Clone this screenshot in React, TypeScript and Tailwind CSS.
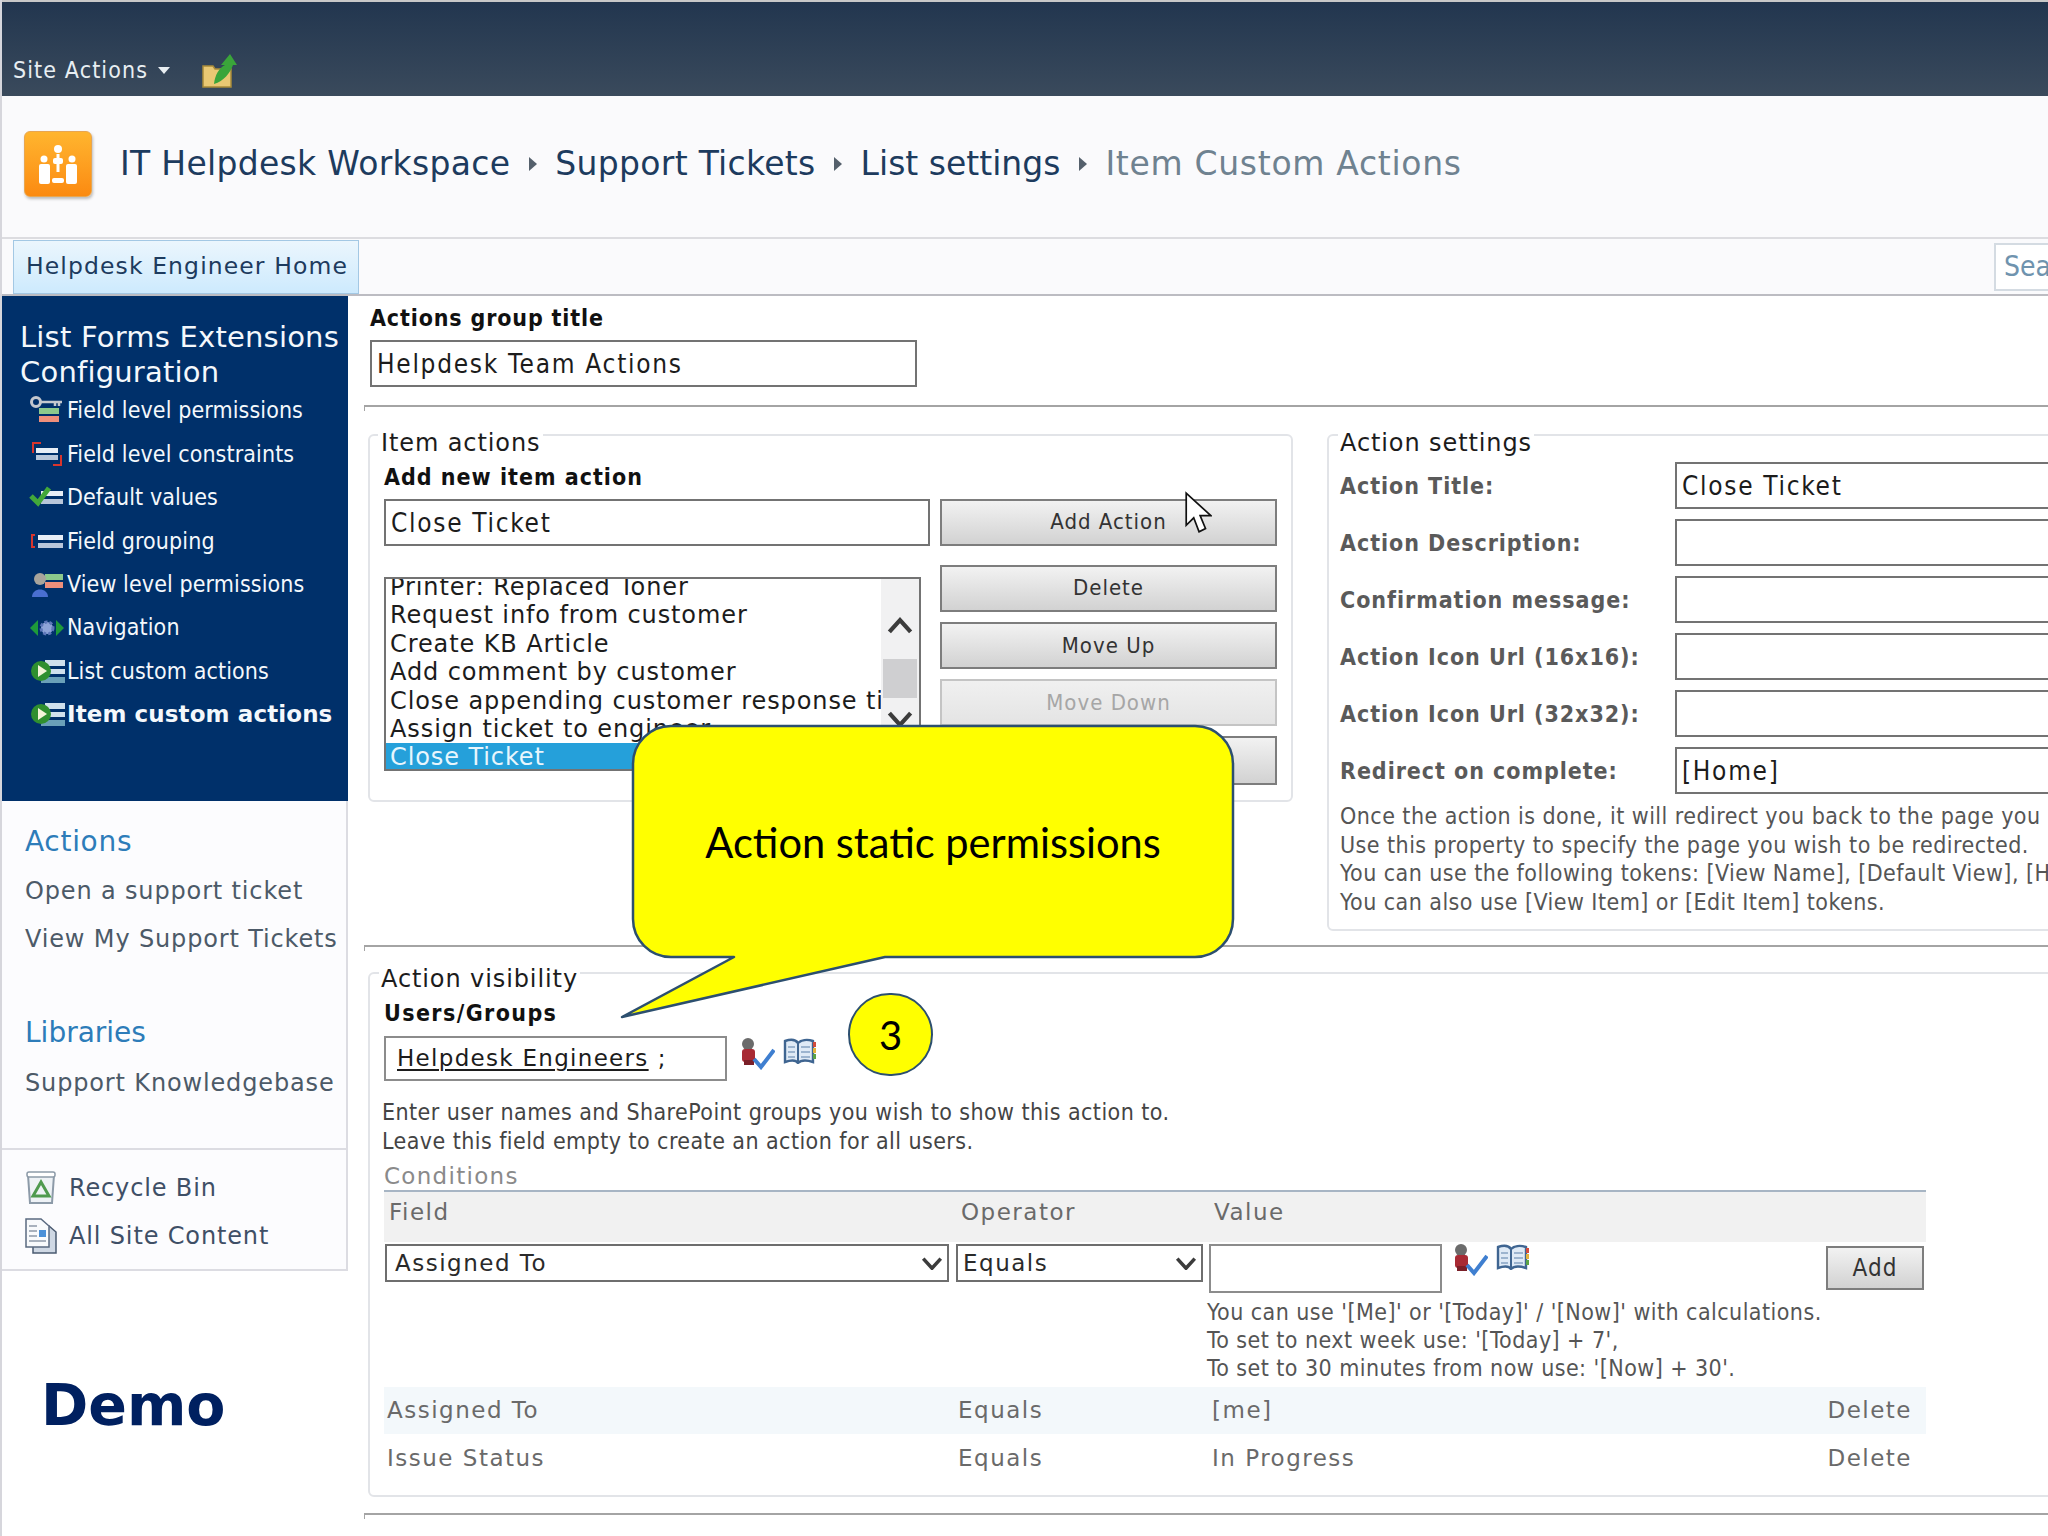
import React from "react";

const W = "font-['DejaVu_Sans',sans-serif]";
const C = "font-['DejaVu_Sans_Condensed','DejaVu_Sans',sans-serif]";

function TextBox({ className = "", children }: { className?: string; children?: React.ReactNode }) {
  return (
    <div className={`flex items-center border-2 border-[#737373] bg-white text-[#1c1c1c] text-[26px] tracking-[1.7px] px-[5px] pt-[2px] ${C} ${className}`}>
      {children}
    </div>
  );
}

function Btn({ className = "", disabled, children }: { className?: string; disabled?: boolean; children?: React.ReactNode }) {
  return (
    <div
      className={`flex items-center justify-center border-2 text-[22px] tracking-[1px] ${C} bg-gradient-to-b ${
        disabled
          ? "border-[#c4c4c4] from-[#f0f0f0] to-[#e4e4e4] text-[#a6a6a6]"
          : "border-[#7d7d7d] from-[#f2f2f2] to-[#d2d2d2] text-[#333]"
      } ${className}`}
    >
      {children}
    </div>
  );
}

function Chevron({ up, className = "" }: { up?: boolean; className?: string }) {
  return (
    <svg viewBox="0 0 24 16" className={className}>
      <path d={up ? "M2 14 L12 3 L22 14" : "M2 3 L12 14 L22 3"} fill="none" stroke="#3c3c3c" strokeWidth="4" />
    </svg>
  );
}

function PickerIcons({ className = "" }: { className?: string }) {
  return (
    <div className={`flex items-start gap-[8px] ${className}`}>
      <svg viewBox="0 0 37 32" className="w-[37px] h-[32px]">
        <ellipse cx="10" cy="6" rx="6" ry="6" fill="#6b6b6b" />
        <rect x="4" y="11" width="13" height="13" rx="3" fill="#a82a34" />
        <rect x="6" y="22" width="10" height="5" fill="#7a1f28" />
        <path d="M16 21 L23 29 L36 12" fill="none" stroke="#3f7fd0" strokeWidth="4" />
      </svg>
      <svg viewBox="0 0 34 26" className="w-[34px] h-[26px]">
        <path d="M2 3 C8 1 13 2 15 5 C18 2 24 1 30 3 V24 C24 22 18 22 15 25 C13 22 8 22 2 24 Z" fill="#dfeaf6" stroke="#3f6591" strokeWidth="2.4" />
        <path d="M15 5 V25" stroke="#3f6591" strokeWidth="2" />
        <path d="M5 9 H12 M5 14 H12 M5 19 H12 M18 9 H27 M18 14 H27 M18 19 H27" stroke="#86a3c2" strokeWidth="1.5" />
        <rect x="30" y="4" width="3" height="5" fill="#d24b3c" />
        <rect x="30" y="10" width="3" height="5" fill="#e3b23c" />
        <rect x="30" y="16" width="3" height="5" fill="#5aa345" />
      </svg>
    </div>
  );
}

function SideIcon({ kind }: { kind: number }) {
  return (
    <svg viewBox="0 0 36 30" className="w-[36px] h-[30px] shrink-0">
      {kind === 0 && (
        <>
          <circle cx="7" cy="6" r="4.5" fill="none" stroke="#c4c8ce" strokeWidth="3" />
          <path d="M11 6 H33 M26 6 V10 M30 6 V10" stroke="#c4c8ce" strokeWidth="2.5" />
          <rect x="10" y="12" width="20" height="6" fill="#8cc98c" />
          <rect x="10" y="20" width="20" height="6" fill="#ee8f7b" />
        </>
      )}
      {kind === 1 && (
        <>
          <path d="M12 4 H4 V14 M24 26 H32 V16" fill="none" stroke="#d8352d" strokeWidth="2" />
          <rect x="7" y="9" width="22" height="5" fill="#e8eef6" />
          <rect x="7" y="16" width="22" height="5" fill="#b8c6da" />
        </>
      )}
      {kind === 2 && (
        <>
          <rect x="12" y="9" width="22" height="5" fill="#e8eef6" />
          <rect x="12" y="17" width="22" height="5" fill="#b8c6da" />
          <path d="M2 14 L9 21 L20 6" fill="none" stroke="#42a83a" strokeWidth="5" />
        </>
      )}
      {kind === 3 && (
        <>
          <path d="M6 9 H3 V21 H6" fill="none" stroke="#d8352d" strokeWidth="2" />
          <rect x="9" y="9" width="25" height="5" fill="#e8eef6" />
          <rect x="9" y="17" width="25" height="5" fill="#b8c6da" />
        </>
      )}
      {kind === 4 && (
        <>
          <rect x="16" y="5" width="18" height="6" fill="#8cc98c" />
          <rect x="16" y="13" width="18" height="6" fill="#ee8f7b" />
          <circle cx="11" cy="10" r="6" fill="#a8a49c" />
          <path d="M3 28 C3 18 19 18 19 28 Z" fill="#4a6fd0" />
        </>
      )}
      {kind === 5 && (
        <>
          <path d="M1 15 L9 7 V23 Z" fill="#1e9a3a" />
          <path d="M35 15 L27 7 V23 Z" fill="#1e9a3a" />
          <circle cx="18" cy="15" r="6" fill="#8ea4d8" stroke="#5c76b8" strokeWidth="3" strokeDasharray="3 2" />
        </>
      )}
      {kind === 6 && (
        <>
          <rect x="16" y="4" width="20" height="6" fill="#cfe0ec" />
          <rect x="20" y="13" width="16" height="5" fill="#cfe0ec" />
          <rect x="12" y="21" width="24" height="6" fill="#6aa0b8" />
          <circle cx="12" cy="15" r="10" fill="#2f8f2f" />
          <path d="M9 9 L18 15 L9 21 Z" fill="#f4f4d8" />
        </>
      )}
    </svg>
  );
}

const navItems: [number, string, boolean?][] = [
  [0, "Field level permissions"],
  [1, "Field level constraints"],
  [2, "Default values"],
  [3, "Field grouping"],
  [4, "View level permissions"],
  [5, "Navigation"],
  [6, "List custom actions"],
  [6, "Item custom actions", true],
];

const settings = [
  ["Action Title:", "Close Ticket"],
  ["Action Description:", ""],
  ["Confirmation message:", ""],
  ["Action Icon Url (16x16):", ""],
  ["Action Icon Url (32x32):", ""],
  ["Redirect on complete:", "[Home]"],
];

const listRows = [
  "Printer: Replaced Toner",
  "Request info from customer",
  "Create KB Article",
  "Add comment by customer",
  "Close appending customer response time",
  "Assign ticket to engineer",
];

function Hr({ className = "" }: { className?: string }) {
  return <div className={`h-[6px] shrink-0 border-t-2 border-l border-[#a4a4a4] ${className}`} />;
}

function Sep() {
  return (
    <svg viewBox="0 0 8 14" className="w-[8px] h-[14px] mx-[18.5px]">
      <path d="M0 0 L8 7 L0 14 Z" fill="#55606c" />
    </svg>
  );
}

export default function App() {
  return (
    <div className="relative w-[2048px] h-[1536px] overflow-hidden bg-white">
      <div className="flex flex-col h-full border-l-2 border-[#d6d6dc]">
        {/* top bar */}
        <div className="h-[96px] shrink-0 border-t-2 border-[#c8c8c8] bg-gradient-to-b from-[#22364f] to-[#3a4a5c] flex items-end pb-[11px] pl-[11px]">
          <span className={`text-[#e8eef2] text-[23px] tracking-[1.1px] leading-[30px] ${C}`}>Site Actions</span>
          <svg viewBox="0 0 12 8" className="w-[12px] h-[8px] ml-[10px] mb-[10px]">
            <path d="M0 0 H12 L6 7 Z" fill="#e8eef2" />
          </svg>
          <svg viewBox="0 0 36 36" className="w-[36px] h-[36px] ml-[32px] -mb-[4px]">
            <path d="M1 13 H11 L13 16 H29 V34 H1 Z" fill="#e9c873" stroke="#a88a3a" strokeWidth="1.5" />
            <path d="M12 31 C13 22 17 15 23 12 L19 12 L28 1 L35 12 L31 12 C28 20 22 28 12 31 Z" fill="#3aa53a" />
          </svg>
        </div>

        {/* title row */}
        <div className="h-[141px] shrink-0 bg-[#fafafc] flex items-center pl-[22px] pb-[5px]">
          <div className="w-[68px] h-[66px] rounded-[6px] bg-gradient-to-b from-[#ffb52e] to-[#fb8a10] border border-[#e8a650] shadow-[1px_2px_3px_#bbb] flex items-center justify-center mr-[28px]">
            <svg viewBox="0 0 44 44" className="w-[44px] h-[44px]">
              <circle cx="22" cy="7" r="4" fill="#fff" />
              <circle cx="8" cy="17" r="3.5" fill="#fff" />
              <circle cx="36" cy="17" r="3.5" fill="#fff" />
              <path d="M22 12 V30" stroke="#fff" strokeWidth="3" />
              <rect x="3" y="22" width="11" height="20" rx="2" fill="#fff" />
              <rect x="30" y="22" width="11" height="20" rx="2" fill="#fff" />
              <rect x="17" y="16" width="10" height="6" rx="2" fill="#fff" />
              <rect x="16" y="36" width="12" height="5" rx="2" fill="#fff" />
            </svg>
          </div>
          <div className={`flex items-center text-[33px] leading-[44px] text-[#1d3b5e] ${W}`}>
            <span className="tracking-[0.3px]">IT Helpdesk Workspace</span>
            <Sep />
            <span className="tracking-[0.3px]">Support Tickets</span>
            <Sep />
            <span>List settings</span>
            <Sep />
            <span className="tracking-[0.7px] text-[#6f8290]">Item Custom Actions</span>
          </div>
        </div>

        {/* nav row */}
        <div className="h-[59px] shrink-0 flex items-stretch justify-between border-t-2 border-b-2 border-t-[#dcdce0] border-b-[#bcbcc2] bg-[#fafafc] pl-[11px]">
          <div className={`w-[346px] mt-[1px] border border-[#a3c8e4] bg-gradient-to-b from-[#ebf6fd] to-[#cdeafd] flex items-center pl-[12px] text-[23.5px] tracking-[1.1px] text-[#1d3b5e] ${W}`}>
            Helpdesk Engineer Home
          </div>
          <div className={`w-[54px] mt-[4px] mb-[3px] border-l-2 border-y-2 border-[#d4dbe2] bg-white text-[#6f93ae] text-[28px] pl-[8px] flex items-center overflow-hidden ${C}`}>
            Sea
          </div>
        </div>

        {/* body */}
        <div className="flex flex-1 min-h-0">
          {/* sidebar */}
          <div className="w-[346px] shrink-0 flex flex-col">
            <div className="h-[505px] shrink-0 bg-[#00306a] pl-[18px] pt-[24px] text-[#f4f8fc]">
              <div className={`text-[29px] tracking-[0.2px] leading-[35px] ${W}`}>
                List Forms Extensions
                <br />
                Configuration
              </div>
              <div className="-mt-[1px] flex flex-col">
                {navItems.map(([k, t, b]) => (
                  <div key={t} className="h-[43.4px] flex items-center pl-[9px] gap-[2px]">
                    <SideIcon kind={k} />
                    {b ? (
                      <span className={`text-[23px] font-bold tracking-[0.1px] ${W}`}>{t}</span>
                    ) : (
                      <span className={`text-[23px] tracking-[0.1px] ${C}`}>{t}</span>
                    )}
                  </div>
                ))}
              </div>
            </div>
            <div className={`h-[470px] shrink-0 border-r-2 border-b-2 border-[#dcdce2] bg-[#fcfcfe] pl-[23px] text-[#4c5a68] text-[24px] tracking-[0.85px] ${W} flex flex-col`}>
              <div className="mt-[23px] text-[#2d7cb9] text-[28px] tracking-[0.7px] leading-[36px]">Actions</div>
              <div className="mt-[13px] leading-[36px]">Open a support ticket</div>
              <div className="mt-[12px] leading-[36px]">View My Support Tickets</div>
              <div className="mt-[58px] text-[#2d7cb9] text-[28px] tracking-normal leading-[36px]">Libraries</div>
              <div className="mt-[14px] leading-[36px]">Support Knowledgebase</div>
              <div className="mt-[47px] -ml-[23px] border-t-2 border-[#dcdce2]" />
              <div className="mt-[18px] h-[40px] flex items-center gap-[12px] text-[#3f4f66]">
                <svg viewBox="0 0 32 36" className="w-[32px] h-[36px]">
                  <path d="M3 5 L5 33 H27 L29 5 Z" fill="#eef2f6" stroke="#8c9aa8" strokeWidth="2" />
                  <rect x="2" y="2" width="28" height="5" rx="2" fill="#fff" stroke="#8c9aa8" strokeWidth="1.5" />
                  <path d="M16 12 L24 26 H8 Z" fill="none" stroke="#4f9a4f" strokeWidth="3" />
                </svg>
                Recycle Bin
              </div>
              <div className="mt-[8px] h-[40px] flex items-center gap-[12px] text-[#3f4f66]">
                <svg viewBox="0 0 32 36" className="w-[32px] h-[36px]">
                  <path d="M8 8 H24 L31 14 V35 H8 Z" fill="#cfd8e4" stroke="#4a5a70" strokeWidth="1.5" />
                  <path d="M1 1 H16 L24 8 V29 H1 Z" fill="#f8fafc" stroke="#5a6a80" strokeWidth="1.5" />
                  <rect x="14" y="12" width="7" height="7" fill="#4a90d8" />
                  <path d="M4 8 H12 M4 13 H12 M4 18 H12 M4 23 H21" stroke="#8d99a8" strokeWidth="1.5" />
                </svg>
                All Site Content
              </div>
            </div>
            <div className={`mt-[101px] ml-[39px] text-[57px] leading-[66px] font-bold text-[#002060] ${W}`}>Demo</div>
          </div>

          {/* main */}
          <div className={`flex-1 min-w-0 pl-[16px] flex flex-col text-[#1c1c1c] ${C}`}>
            <div className="ml-[6px] mt-[7px] text-[23px] tracking-[0.85px] leading-[30px] font-bold text-[#111]">Actions group title</div>
            <TextBox className="ml-[6px] mt-[7px] w-[547px] h-[47px] shrink-0">Helpdesk Team Actions</TextBox>
            <Hr className="mt-[18px]" />

            <div className="mt-[23px] ml-[4px] flex items-start gap-[34px]">
              {/* Item actions */}
              <div className="w-[925px] h-[368px] shrink-0 rounded-[6px] border-2 border-[#e2e4e8] pl-[14px]">
                <div className={`-mt-[5px] -ml-[6px] w-fit bg-white px-[3px] text-[24px] tracking-[0.9px] leading-[24px] ${W}`}>Item actions</div>
                <div className="mt-[7px] text-[23px] tracking-[1px] leading-[30px] font-bold text-[#111]">Add new item action</div>
                <div className="mt-[7px] flex gap-[10px]">
                  <TextBox className="w-[546px] h-[47px]">Close Ticket</TextBox>
                  <Btn className="w-[337px] h-[47px] pb-[2px]">Add Action</Btn>
                </div>
                <div className="mt-[19px] flex">
                  <div className="w-[537px] h-[194px] mt-[12px] border-2 border-[#737373] flex overflow-hidden">
                    <div className={`flex-1 min-w-0 overflow-hidden text-[24px] tracking-[0.9px] leading-[28.4px] pl-[4px] -mt-[6px] whitespace-nowrap ${W}`}>
                      {listRows.map((r) => (
                        <div key={r}>{r}</div>
                      ))}
                      <div className="bg-[#25a0da] text-[#e8f6fd] -ml-[4px] pl-[4px] h-[30px]">Close Ticket</div>
                    </div>
                    <div className="w-[38px] shrink-0 bg-[#f1f1f2] flex flex-col items-center pt-[38px]">
                      <Chevron up className="w-[26px] h-[17px]" />
                      <div className="mt-[25px] w-[34px] h-[39px] bg-[#cfcfd1]" />
                      <Chevron className="mt-[12px] w-[26px] h-[17px]" />
                    </div>
                  </div>
                  <div className="ml-[19px] flex flex-col gap-[10px]">
                    <Btn className="w-[337px] h-[47px] pb-[3px]">Delete</Btn>
                    <Btn className="w-[337px] h-[47px]">Move Up</Btn>
                    <Btn disabled className="w-[337px] h-[47px]">Move Down</Btn>
                    <Btn className="w-[337px] h-[49px]" />
                  </div>
                </div>
              </div>

              {/* Action settings */}
              <div className="w-[800px] h-[497px] shrink-0 rounded-[6px] border-2 border-[#e2e4e8] pl-[11px]">
                <div className={`-mt-[5px] w-fit bg-white px-[2px] -ml-[2px] text-[24px] tracking-[0.9px] leading-[24px] ${W}`}>Action settings</div>
                <div className="mt-[7px] flex flex-col gap-[10px]">
                  {settings.map(([l, v]) => (
                    <div key={l} className="flex items-center h-[47px]">
                      <div className="w-[335px] shrink-0 pt-[1px] text-[23px] tracking-[0.95px] font-bold text-[#5a5a5a]">{l}</div>
                      <TextBox className="w-[500px] h-[47px] shrink-0">{v}</TextBox>
                    </div>
                  ))}
                </div>
                <div className="mt-[8px] text-[23px] tracking-[0.45px] leading-[28.6px] text-[#555] whitespace-nowrap">
                  <div>Once the action is done, it will redirect you back to the page you c</div>
                  <div>Use this property to specify the page you wish to be redirected.</div>
                  <div>You can use the following tokens: [View Name], [Default View], [H</div>
                  <div>You can also use [View Item] or [Edit Item] tokens.</div>
                </div>
              </div>
            </div>

            <Hr className="mt-[14px]" />

            {/* Action visibility */}
            <div className="mt-[21px] ml-[4px] w-[1800px] h-[525px] shrink-0 rounded-[6px] border-2 border-[#e2e4e8] pl-[14px]">
              <div className={`-mt-[7px] -ml-[5px] w-fit bg-white px-[2px] text-[24px] tracking-[0.9px] leading-[24px] ${W}`}>Action visibility</div>
              <div className="mt-[7px] text-[23px] tracking-[1.4px] leading-[30px] font-bold text-[#111]">Users/Groups</div>
              <div className="mt-[8px] flex items-start">
                <div className={`w-[343px] h-[45px] border-2 border-[#8c8c8c] flex items-center pl-[11px] text-[23px] tracking-[1.3px] ${W}`}>
                  <span className="underline underline-offset-[3px]">Helpdesk Engineers</span>
                  <span className="ml-[9px]">;</span>
                </div>
                <PickerIcons className="ml-[11px] mt-[2px]" />
              </div>
              <div className="mt-[17px] text-[23px] tracking-[0.43px] leading-[29px] text-[#444] -ml-[2px]">
                <div>Enter user names and SharePoint groups you wish to show this action to.</div>
                <div>Leave this field empty to create an action for all users.</div>
              </div>
              <div className={`mt-[7px] text-[23px] tracking-[1.3px] leading-[26.5px] text-[#8a8a8a] ${W}`}>Conditions</div>
              <div className={`w-[1542px] text-[#6a6a6a] text-[23px] tracking-[1.5px] ${W}`}>
                <div className="h-[52px] border-t-2 border-[#a7b5c4] bg-[#f1f1f1] flex pt-[5px] leading-[30px]">
                  <div className="w-[577px] pl-[5px]">Field</div>
                  <div className="w-[253px]">Operator</div>
                  <div>Value</div>
                </div>
                <div className="mt-[2px] flex items-start">
                  <div className="ml-[1px] w-[564px] h-[38px] border-2 border-[#6e6e6e] flex items-center justify-between pl-[8px] pr-[4px] pt-[1px] text-[#2a2a2a]">
                    Assigned To
                    <Chevron className="w-[22px] h-[14px]" />
                  </div>
                  <div className="ml-[7px] w-[247px] h-[38px] border-2 border-[#6e6e6e] flex items-center justify-between pl-[5px] pr-[4px] pt-[1px] text-[#2a2a2a]">
                    Equals
                    <Chevron className="w-[22px] h-[14px]" />
                  </div>
                  <div className="ml-[6px] flex-1 min-w-0">
                    <div className="flex items-start">
                      <div className="w-[233px] h-[49px] border-2 border-[#8c8c8c]" />
                      <PickerIcons className="ml-[9px]" />
                      <Btn className="ml-auto mr-[2px] mt-[2px] w-[98px] h-[44px] text-[24px]">Add</Btn>
                    </div>
                    <div className={`-ml-[2px] mt-[5px] text-[23px] tracking-[0.45px] leading-[28.4px] text-[#555] ${C}`}>
                      <div>You can use '[Me]' or '[Today]' / '[Now]' with calculations.</div>
                      <div>To set to next week use: '[Today] + 7',</div>
                      <div>To set to 30 minutes from now use: '[Now] + 30'.</div>
                    </div>
                  </div>
                </div>
                {[
                  ["Assigned To", "[me]", "bg-[#f3f8fb]"],
                  ["Issue Status", "In Progress", ""],
                ].map(([a, v, bg], i) => (
                  <div key={a} className={`h-[47.5px] flex items-center ${bg} ${i === 0 ? "mt-[4px]" : ""}`}>
                    <div className="w-[574px] pl-[3px]">{a}</div>
                    <div className="w-[254px]">Equals</div>
                    <div className="flex-1">{v}</div>
                    <div className="pr-[14px]">Delete</div>
                  </div>
                ))}
              </div>
            </div>

            <Hr className="mt-[16px]" />
          </div>
        </div>
      </div>

      {/* callout */}
      <div className="absolute left-[620px] top-[724px] w-[616px] h-[296px]">
        <svg viewBox="620 724 616 296" className="absolute inset-0 w-full h-full">
          <path
            d="M671 726 H1195 A38 38 0 0 1 1233 764 V919 A38 38 0 0 1 1195 957 H885 L622 1017 L734 957 H671 A38 38 0 0 1 633 919 V764 A38 38 0 0 1 671 726 Z"
            fill="#ffff00"
            stroke="#2c4f6f"
            strokeWidth="2.5"
            strokeLinejoin="round"
          />
        </svg>
        <div className="absolute left-[13px] top-[2px] w-[600px] h-[233px] flex items-center justify-center font-['Lato',sans-serif] text-[41.6px] text-black">
          Action static permissions
        </div>
      </div>

      {/* number badge */}
      <div className="absolute left-[848px] top-[993px] w-[85px] h-[83px] rounded-full bg-[#ffff00] border-[2.5px] border-[#2c4f6f] flex items-center justify-center font-['Lato',sans-serif] text-[40px] text-black">
        3
      </div>

      {/* cursor */}
      <svg viewBox="0 0 26 42" className="absolute left-[1184px] top-[491px] w-[28px] h-[45px]">
        <path d="M2 2 V32 L9 25 L14 38 L20 35 L15 23 L25 23 Z" fill="#fff" stroke="#111" strokeWidth="1.6" />
      </svg>
    </div>
  );
}
